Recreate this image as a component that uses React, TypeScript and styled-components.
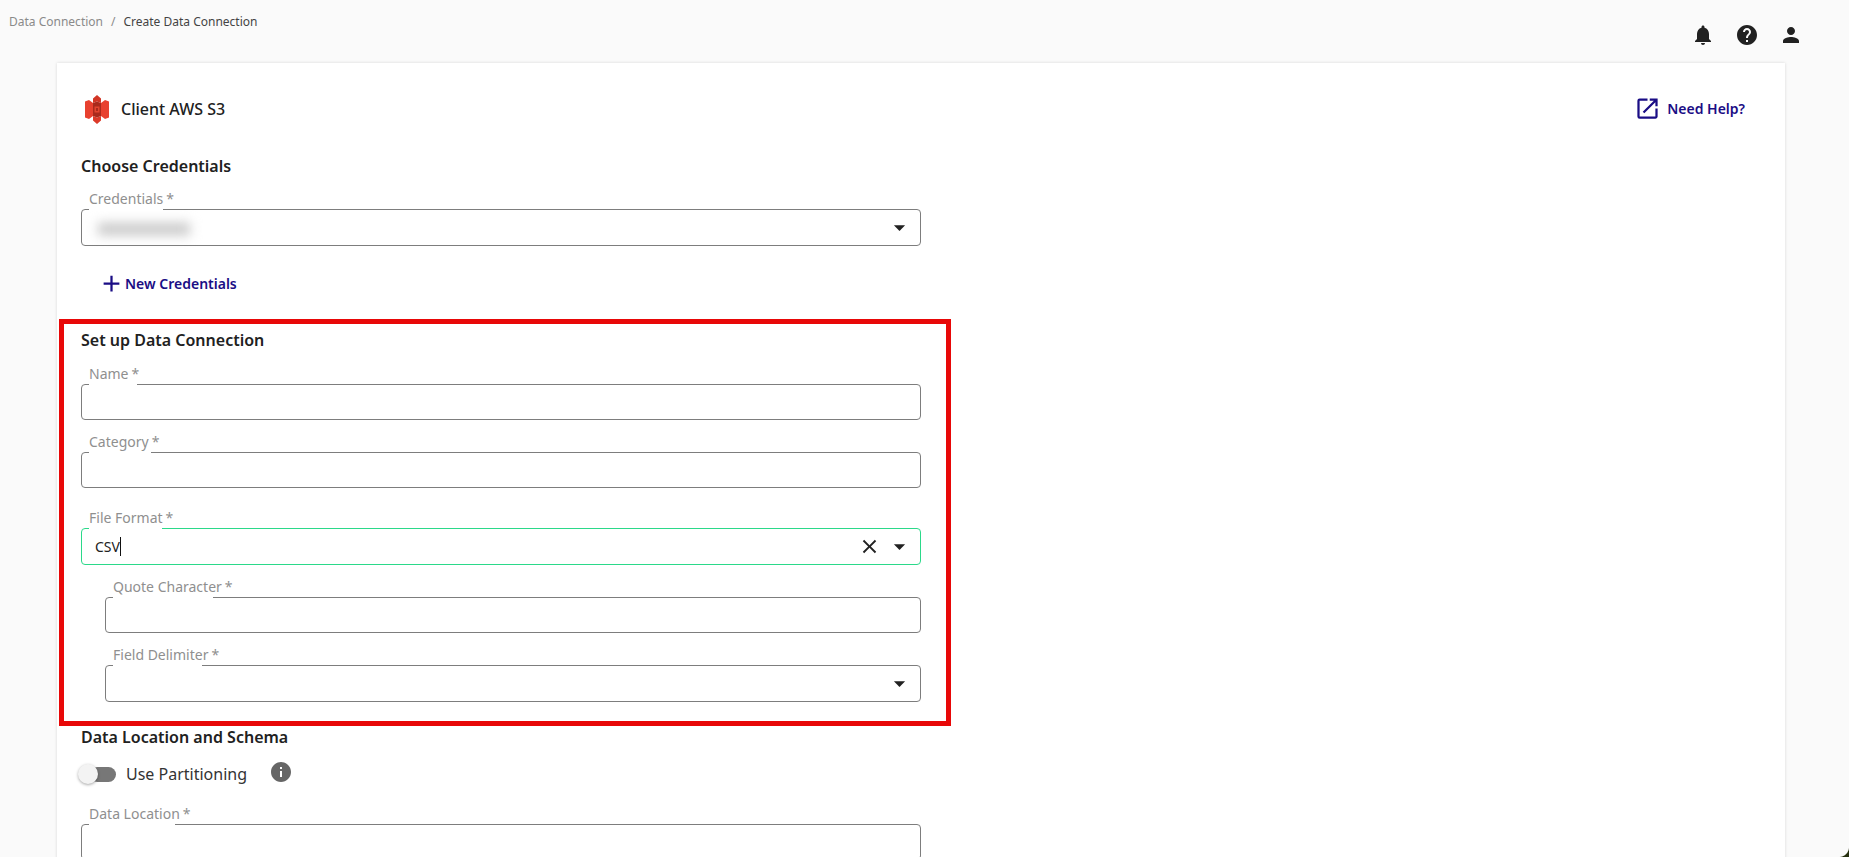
import styled, { createGlobalStyle } from "styled-components";
import {
  MdAdd,
  MdArrowDropDown,
  MdClose,
  MdHelp,
  MdInfo,
  MdNotifications,
  MdOpenInNew,
  MdPerson,
} from "react-icons/md";

const NAVY = "#1a0d85";

const GlobalStyle = createGlobalStyle`
  html, body {
    margin: 0;
    height: 100%;
    overflow: hidden;
    background: #fafafa;
  }

  body {
    font-family: "Noto Sans", "Open Sans", sans-serif;
    color: #212121;
  }
`;

const Page = styled.div`
  height: 857px;
  overflow: hidden;
  box-sizing: border-box;
`;

const TopBar = styled.header`
  height: 63px;
  display: flex;
  justify-content: space-between;
  padding: 11px 46px 0 9px;
  box-sizing: border-box;
`;

const Breadcrumb = styled.nav`
  display: flex;
  gap: 8px;
  height: 20px;
  align-items: center;
  font-size: 12px;
  color: #8a8a8a;
`;

const Current = styled.span`
  color: #444;
`;

const TopIcons = styled.div`
  display: flex;
  gap: 20px;
  padding-top: 12px;
  color: #212121;
  font-size: 24px;

  svg {
    display: block;
  }
`;

const Card = styled.main`
  width: 1728px;
  margin-left: 57px;
  padding: 31px 0 0 24px;
  box-sizing: border-box;
  background: #fff;
  min-height: 794px;
  box-shadow: 0 0 3px rgba(0, 0, 0, 0.14);
`;

const FormColumn = styled.div`
  width: 840px;
`;

const TitleRow = styled.div`
  width: 1664px;
  height: 30px;
  display: flex;
  align-items: center;
  justify-content: space-between;
`;

const Brand = styled.div`
  display: flex;
  align-items: center;
  gap: 12px;
  padding-left: 4px;
  font-size: 16px;
  font-weight: 500;
`;

const HelpLink = styled.a`
  display: flex;
  align-items: center;
  gap: 6px;
  padding-bottom: 1px;
  font-size: 14px;
  font-weight: 600;
  color: ${NAVY};

  svg {
    display: block;
  }
`;

const SectionTitle = styled.h2<{ $top?: number }>`
  margin: ${(p) => p.$top ?? 0}px 0 0;
  font-size: 16px;
  line-height: 24px;
  font-weight: 600;
  color: #212121;
`;

const Field = styled.div<{ $top?: number; $nested?: boolean }>`
  margin-top: ${(p) => p.$top ?? 10}px;
  margin-left: ${(p) => (p.$nested ? 24 : 0)}px;
`;

const Label = styled.label<{ $notch: number }>`
  position: relative;
  z-index: 1;
  display: flex;
  width: fit-content;
  height: 22px;
  margin: 0 0 -2px 8px;
  padding-bottom: 2px;
  font-size: 14px;
  line-height: 24px;
  color: #8f8f8f;

  &::after {
    content: "";
    position: absolute;
    z-index: -1;
    left: 0;
    bottom: 0;
    width: ${(p) => p.$notch}px;
    height: 3px;
    background: #fff;
  }
`;

const Star = styled.span`
  margin-left: 3px;
`;

const Box = styled.div<{ $focused?: boolean; $tall?: boolean }>`
  height: ${(p) => (p.$tall ? 37 : 36)}px;
  box-sizing: border-box;
  display: flex;
  align-items: center;
  padding: 0 7px 0 13px;
  background: #fff;
  border: 1px solid ${(p) => (p.$focused ? "#2bd98a" : "#7d7d7d")};
  border-radius: 4px;
`;

const TextInput = styled.input`
  flex: 1;
  min-width: 0;
  border: 0;
  padding: 0;
  outline: none;
  background: transparent;
  font: inherit;
  font-size: 14px;
`;

const Value = styled.span`
  flex: 1;
  display: flex;
  align-items: center;
  font-size: 14px;
  color: #212121;
`;

const Caret = styled.span`
  width: 1px;
  height: 19px;
  background: #111;
`;

const BlurredValue = styled.div`
  width: 92px;
  height: 12px;
  margin: 2px auto 0 3px;
  background: #c6c6c6;
  filter: blur(6px);
`;

const BoxIcons = styled.div`
  display: flex;
  align-items: center;
  gap: 5px;
  color: #212121;

  svg {
    display: block;
  }
`;

const AddButton = styled.button`
  display: flex;
  align-items: center;
  height: 24px;
  margin: 25px 0 0 17px;
  padding: 0;
  border: 0;
  background: none;
  font: inherit;
  font-size: 14px;
  font-weight: 600;
  color: ${NAVY};

  svg {
    display: block;
  }
`;

const Highlight = styled.section`
  width: 892px;
  box-sizing: border-box;
  margin: 24px 0 0 -22px;
  padding: 4px 25px 19px 17px;
  border: 5px solid #e80808;
`;

const ToggleRow = styled.div`
  display: flex;
  align-items: center;
  height: 24px;
  margin-top: 13px;
  font-size: 16px;
  color: #333;
`;

const ToggleTrack = styled.span`
  position: relative;
  width: 26px;
  height: 15px;
  margin: 0 10px 0 9px;
  border-radius: 8px;
  background: #777;
`;

const ToggleThumb = styled.span`
  position: absolute;
  left: -12px;
  top: -3px;
  width: 20px;
  height: 20px;
  border-radius: 50%;
  background: #f3f3f3;
  box-shadow: 0 1px 3px rgba(0, 0, 0, 0.35);
`;

const InfoIcon = styled(MdInfo)`
  margin: -4px 0 0 22px;
  color: #666;
`;

const WindowCorner = styled.div`
  position: fixed;
  right: 0;
  bottom: 0;
  width: 10px;
  height: 10px;
  background: radial-gradient(circle at 0 0, transparent 9.5px, #26300f 10.5px);
`;

const S3Logo = () => (
  <svg width="24" height="29" viewBox="0 0 24 29" aria-hidden="true">
    <path d="M0 6.5 4 5l4 3v13l-4 3-4-1.5z" fill="#e8412f" />
    <path d="M24 6.5 20 5l-4 3v13l4 3 4-1.5z" fill="#e8412f" />
    <path d="M8 3.5 12 0l4 3.5V8l-4-1.5L8 8z" fill="#d23525" />
    <path d="M8 21l4 1.5 4-1.5v4.5L12 29l-4-3.5z" fill="#dc3a29" />
    <path d="M8 8l4-1.5L16 8v13l-4 1.5L8 21z" fill="#a92a1c" />
    <path d="M9.5 11.5h5v6h-5z" fill="#e2452f" />
    <path d="M11 13h2v3h-2z" fill="#a92a1c" />
  </svg>
);

type FormFieldProps = {
  label: string;
  notch: number;
  top?: number;
  nested?: boolean;
  select?: boolean;
};

const FormField = ({ label, notch, top, nested, select }: FormFieldProps) => (
  <Field $top={top} $nested={nested}>
    <Label $notch={notch}>
      {label}
      <Star>*</Star>
    </Label>
    <Box $tall={select}>
      <TextInput aria-label={label} />
      {select && (
        <BoxIcons>
          <MdArrowDropDown size={27} />
        </BoxIcons>
      )}
    </Box>
  </Field>
);

const App = () => {
  return (
    <Page>
      <GlobalStyle />
      <TopBar>
        <Breadcrumb>
          <span>Data Connection</span>
          <span>/</span>
          <Current>Create Data Connection</Current>
        </Breadcrumb>
        <TopIcons>
          <MdNotifications />
          <MdHelp />
          <MdPerson />
        </TopIcons>
      </TopBar>
      <Card>
        <TitleRow>
          <Brand>
            <S3Logo />
            Client AWS S3
          </Brand>
          <HelpLink>
            <MdOpenInNew size={27} />
            Need Help?
          </HelpLink>
        </TitleRow>
        <FormColumn>
          <SectionTitle $top={30}>Choose Credentials</SectionTitle>
          <Field $top={9}>
            <Label $notch={74}>
              Credentials
              <Star>*</Star>
            </Label>
            <Box $tall>
              <BlurredValue />
              <BoxIcons>
                <MdArrowDropDown size={27} />
              </BoxIcons>
            </Box>
          </Field>
          <AddButton>
            <MdAdd size={27} />
            New Credentials
          </AddButton>
          <Highlight>
            <SectionTitle>Set up Data Connection</SectionTitle>
            <FormField label="Name" notch={48} />
            <FormField label="Category" notch={62} />
            <Field $top={18}>
              <Label $notch={73}>
                File Format
                <Star>*</Star>
              </Label>
              <Box $focused $tall>
                <Value>
                  CSV
                  <Caret />
                </Value>
                <BoxIcons>
                  <MdClose size={23} />
                  <MdArrowDropDown size={27} />
                </BoxIcons>
              </Box>
            </Field>
            <FormField label="Quote Character" notch={100} nested />
            <FormField label="Field Delimiter" notch={89} nested select />
          </Highlight>
          <SectionTitle $top={-1}>Data Location and Schema</SectionTitle>
          <ToggleRow>
            <ToggleTrack>
              <ToggleThumb />
            </ToggleTrack>
            Use Partitioning
            <InfoIcon size={24} />
          </ToggleRow>
          <FormField label="Data Location" notch={86} top={16} />
        </FormColumn>
      </Card>
      <WindowCorner />
    </Page>
  );
};

export default App;
